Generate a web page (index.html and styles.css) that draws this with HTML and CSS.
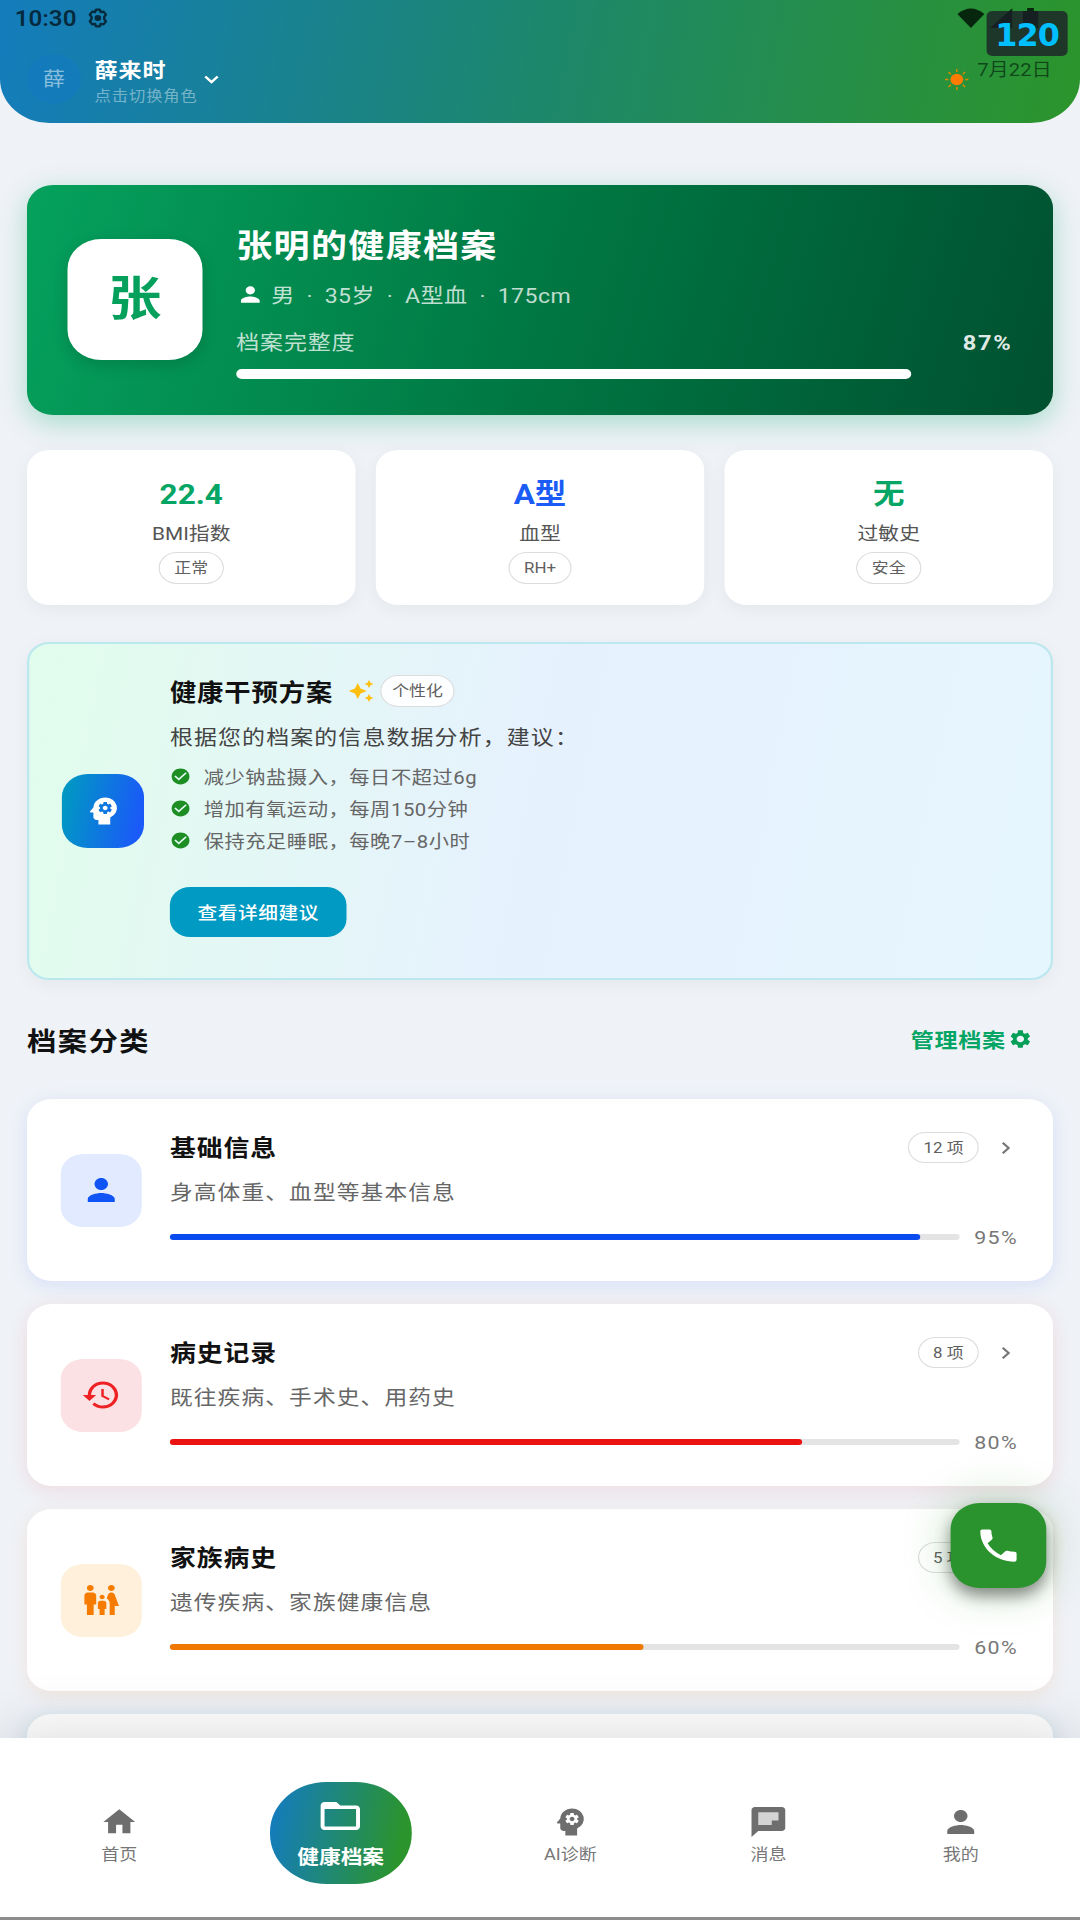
FILE: index.html
```html
<!DOCTYPE html>
<html lang="zh-CN">
<head>
    <meta charset="UTF-8">
    <meta name="viewport" content="width=device-width, initial-scale=1.0">
    <title>健康档案</title>
    <link rel="stylesheet" href="styles.css">
</head>
<body>
    <!-- Iconos compartidos -->
    <svg class="sprite" width="0" height="0">
        <symbol id="i-person" viewBox="0 0 24 24"><path d="M12 12c2.21 0 4-1.79 4-4s-1.79-4-4-4-4 1.79-4 4 1.79 4 4 4zm0 2c-2.67 0-8 1.34-8 4v2h16v-2c0-2.66-5.33-4-8-4z"/></symbol>
        <symbol id="i-brain" viewBox="0 0 24 24"><path fill-rule="evenodd" d="M13 8.57c-.79 0-1.43.64-1.43 1.43s.64 1.43 1.43 1.43 1.43-.64 1.43-1.43-.64-1.43-1.43-1.43z"/><path fill-rule="evenodd" d="M13 3C9.25 3 6.2 5.94 6.02 9.64L4.1 12.2a.5.5 0 0 0 .4.8H6v3c0 1.1.9 2 2 2h1v3h7v-4.68A6.999 6.999 0 0 0 13 3zm3 7c0 .13-.01.26-.02.39l.83.66c.08.06.1.16.05.25l-.8 1.39c-.05.09-.16.12-.24.09l-.99-.4c-.21.16-.43.29-.67.39L14 13.83c-.01.1-.1.17-.2.17h-1.6c-.1 0-.18-.07-.2-.17l-.15-1.06c-.25-.1-.47-.23-.68-.39l-.99.4c-.09.03-.2 0-.25-.09l-.8-1.39c-.05-.08-.03-.19.05-.25l.84-.66c-.01-.13-.02-.26-.02-.39s.02-.27.04-.39l-.85-.66c-.08-.06-.1-.16-.05-.26l.8-1.38c.05-.09.15-.12.24-.09l1 .4c.2-.15.43-.29.67-.39L12 6.17c.02-.1.1-.17.2-.17h1.6c.1 0 .18.07.2.17l.15 1.06c.24.1.46.23.67.39l1-.4c.09-.03.2 0 .24.09l.8 1.38c.05.09.03.2-.05.26l-.85.66c.03.12.04.25.04.39z"/></symbol>
        <symbol id="i-gear" viewBox="0 0 24 24"><path d="M19.14 12.94c.04-.3.06-.61.06-.94 0-.32-.02-.64-.07-.94l2.03-1.58c.18-.14.23-.41.12-.61l-1.92-3.32c-.12-.22-.37-.29-.59-.22l-2.39.96c-.5-.38-1.03-.7-1.62-.94l-.36-2.54c-.04-.24-.24-.41-.48-.41h-3.84c-.24 0-.43.17-.47.41l-.36 2.54c-.59.24-1.13.57-1.62.94l-2.39-.96c-.22-.08-.47 0-.59.22L2.74 8.87c-.12.21-.08.47.12.61l2.03 1.58c-.05.3-.09.63-.09.94s.02.64.07.94l-2.03 1.58c-.18.14-.23.41-.12.61l1.92 3.32c.12.22.37.29.59.22l2.39-.96c.5.38 1.03.7 1.62.94l.36 2.54c.05.24.24.41.48.41h3.84c.24 0 .44-.17.47-.41l.36-2.54c.59-.24 1.13-.56 1.62-.94l2.39.96c.22.08.47 0 .59-.22l1.92-3.32c.12-.22.07-.47-.12-.61l-2.01-1.58zM12 15.6c-1.98 0-3.6-1.62-3.6-3.6s1.62-3.6 3.6-3.6 3.6 1.62 3.6 3.6-1.62 3.6-3.6 3.6z"/></symbol>
        <symbol id="i-check" viewBox="0 0 24 24"><path d="M12 2C6.48 2 2 6.48 2 12s4.48 10 10 10 10-4.48 10-10S17.52 2 12 2zm-2 15l-5-5 1.41-1.41L10 14.17l7.59-7.59L19 8l-9 9z"/></symbol>
        <symbol id="i-right" viewBox="0 0 24 24"><path d="M10 6L8.59 7.41 13.17 12l-4.58 4.59L10 18l6-6z"/></symbol>
    </svg>

    <div class="screen">
        <header>
            <div class="status-bar">
                <span class="time">10:30</span>
                <svg class="status-gear" viewBox="0 0 24 24"><path fill="none" stroke="currentColor" stroke-width="2.6" stroke-linejoin="round" d="M10 2h4l1 3 3-.6 2.6 3.6-1.8 2.6v2.8l1.8 2.6-2.6 3.6-3-.6-1 3h-4l-1-3-3 .6L3.400 16l1.800-2.600v-2.800L3.400 8 6 4.400l3 .6z"/><circle cx="12" cy="12" r="3.600" fill="currentColor"/></svg>
                <div class="status-right">
                    <svg width="24" height="20" viewBox="0 0 24 20"><path d="M12 20L0 6Q12-5 24 6z"/></svg>
                    <svg width="20" height="20" viewBox="0 0 20 20"><path d="M20 0v20H0z"/></svg>
                    <svg width="14" height="20" viewBox="0 0 14 20"><path d="M4 0h6v3h4v17H0V3h4z"/></svg>
                </div>
            </div>
            <div class="user-row">
                <div class="user-avatar">薛</div>
                <div class="user-text">
                    <div class="user-name">薛来时</div>
                    <div class="user-tip">点击切换角色</div>
                </div>
                <svg class="user-arrow" viewBox="0 0 14 9"><path d="M1.500 1.500L7 7l5.500-5.500" fill="none" stroke="#fff" stroke-width="2.400"/></svg>
                <div class="weather">
                    <svg class="sun" viewBox="0 0 24 24"><circle cx="12" cy="12" r="6.500"/><path d="M12 0v3.500M12 20.500V24M0 12h3.500M20.500 12H24M3.500 3.500L6 6M18 18l2.500 2.500M3.500 20.500L6 18M18 6l2.500-2.500" stroke="#d98a00" stroke-width="1.500"/></svg>
                    <span class="date">7月22日</span>
                </div>
            </div>
            <div class="fps">120</div>
        </header>

        <main>
            <section class="hero">
                <div class="hero-avatar">张</div>
                <div class="hero-info">
                    <h1>张明的健康档案</h1>
                    <div class="hero-meta"><svg class="icon"><use href="#i-person"/></svg>男 · 35岁 · A型血 · 175cm</div>
                    <div class="hero-progress"><span>档案完整度</span><b>87%</b></div>
                    <div class="hero-bar"><div style="width: 87%"></div></div>
                </div>
            </section>

            <section class="stats">
                <div class="stat">
                    <div class="stat-value green">22.4</div>
                    <div class="stat-label">BMI指数</div>
                    <span class="tag">正常</span>
                </div>
                <div class="stat">
                    <div class="stat-value blue">A型</div>
                    <div class="stat-label">血型</div>
                    <span class="tag">RH+</span>
                </div>
                <div class="stat">
                    <div class="stat-value green">无</div>
                    <div class="stat-label">过敏史</div>
                    <span class="tag">安全</span>
                </div>
            </section>

            <section class="plan">
                <div class="plan-icon"><svg class="icon"><use href="#i-brain"/></svg></div>
                <div class="plan-body">
                    <div class="plan-title">
                        <h2>健康干预方案</h2>
                        <svg class="sparkle" viewBox="0 0 24 24"><path d="M19 9l1.250-2.750L23 5l-2.750-1.250L19 1l-1.250 2.750L15 5l2.750 1.250L19 9zm-7.500.5L9 4 6.500 9.500 1 12l5.500 2.500L9 20l2.500-5.500L17 12l-5.500-2.500zM19 15l-1.250 2.750L15 19l2.750 1.250L19 23l1.250-2.750L23 19l-2.750-1.250L19 15z"/></svg>
                        <span class="tag">个性化</span>
                    </div>
                    <p>根据您的档案的信息数据分析，建议：</p>
                    <ul>
                        <li><svg class="icon"><use href="#i-check"/></svg>减少钠盐摄入，每日不超过6g</li>
                        <li><svg class="icon"><use href="#i-check"/></svg>增加有氧运动，每周150分钟</li>
                        <li><svg class="icon"><use href="#i-check"/></svg>保持充足睡眠，每晚7–8小时</li>
                    </ul>
                    <button class="plan-button">查看详细建议</button>
                </div>
            </section>

            <div class="section-head">
                <h2>档案分类</h2>
                <a class="manage">管理档案<svg class="icon"><use href="#i-gear"/></svg></a>
            </div>

            <section class="list">
                <div class="card card-blue">
                    <div class="tile"><svg class="icon"><use href="#i-person"/></svg></div>
                    <div class="card-body">
                        <div class="card-top"><h3>基础信息</h3><span class="tag">12 项</span><svg class="icon arrow"><use href="#i-right"/></svg></div>
                        <p>身高体重、血型等基本信息</p>
                        <div class="progress"><div class="track"><div class="fill" style="width: 95%"></div></div><span>95%</span></div>
                    </div>
                </div>
                <div class="card card-red">
                    <div class="tile"><svg class="icon" viewBox="0 0 24 24"><path d="M13 3c-4.970 0-9 4.030-9 9H1l3.890 3.890.07.14L9 12H6c0-3.870 3.130-7 7-7s7 3.130 7 7-3.130 7-7 7c-1.930 0-3.680-.79-4.940-2.060l-1.420 1.420C8.270 19.990 10.510 21 13 21c4.970 0 9-4.030 9-9s-4.030-9-9-9zm-1 5v5l4.280 2.540.72-1.210-3.500-2.080V8H12z"/></svg></div>
                    <div class="card-body">
                        <div class="card-top"><h3>病史记录</h3><span class="tag">8 项</span><svg class="icon arrow"><use href="#i-right"/></svg></div>
                        <p>既往疾病、手术史、用药史</p>
                        <div class="progress"><div class="track"><div class="fill" style="width: 80%"></div></div><span>80%</span></div>
                    </div>
                </div>
                <div class="card card-orange">
                    <div class="tile"><svg class="icon" viewBox="0 0 24 24"><path d="M16 4c0-1.110.89-2 2-2s2 .89 2 2-.89 2-2 2-2-.89-2-2zm4 18v-6h2.500l-2.540-7.630A2.010 2.010 0 0 0 18.060 7h-.12a2 2 0 0 0-1.900 1.370l-.86 2.580c1.080.6 1.820 1.730 1.820 3.050v8h3zm-7.500-10.500c.83 0 1.500-.67 1.500-1.500s-.67-1.500-1.500-1.500S11 9.170 11 10s.67 1.500 1.500 1.500zM5.500 6c1.110 0 2-.89 2-2s-.89-2-2-2-2 .89-2 2 .89 2 2 2zm2 16v-7H9V9c0-1.100-.9-2-2-2H4c-1.100 0-2 .9-2 2v6h1.500v7h4zm6.500 0v-4h1v-4c0-.82-.68-1.500-1.500-1.500h-2c-.82 0-1.500.68-1.500 1.500v4h1v4h3z"/></svg></div>
                    <div class="card-body">
                        <div class="card-top"><h3>家族病史</h3><span class="tag">5 项</span><svg class="icon arrow"><use href="#i-right"/></svg></div>
                        <p>遗传疾病、家族健康信息</p>
                        <div class="progress"><div class="track"><div class="fill" style="width: 60%"></div></div><span>60%</span></div>
                    </div>
                </div>
                <div class="card card-cyan"></div>
            </section>
        </main>

        <button class="fab"><svg class="icon" viewBox="0 0 24 24"><path d="M6.620 10.790c1.440 2.830 3.760 5.140 6.590 6.590l2.200-2.200c.27-.27.67-.36 1.020-.24 1.120.37 2.330.57 3.570.57.55 0 1 .45 1 1V20c0 .55-.45 1-1 1-9.390 0-17-7.610-17-17 0-.55.45-1 1-1h3.500c.55 0 1 .45 1 1 0 1.250.2 2.450.57 3.570.11.35.03.74-.25 1.020l-2.200 2.200z"/></svg></button>

        <nav>
            <a><svg class="icon home" viewBox="0 0 24 24"><path d="M10 20v-6h4v6h5v-8h3L12 3 2 12h3v8z"/></svg>首页</a>
            <a class="active"><svg class="icon" viewBox="0 0 24 24"><path d="M20 6h-8l-2-2H4c-1.100 0-1.990.9-1.990 2L2 18c0 1.100.9 2 2 2h16c1.100 0 2-.9 2-2V8c0-1.100-.9-2-2-2zm0 12H4V8h16v10z"/></svg>健康档案</a>
            <a><svg class="icon"><use href="#i-brain"/></svg>AI诊断</a>
            <a><svg class="icon" viewBox="0 0 24 24"><path fill="#d4d4d4" d="M5 5h14v9H5z"/><path fill-rule="evenodd" d="M20 2H4c-1.100 0-1.990.9-1.990 2L2 22l4-4h14c1.100 0 2-.9 2-2V4c0-1.100-.9-2-2-2zM6 5.500h12v5.500h-4v3H6z"/></svg>消息</a>
            <a><svg class="icon"><use href="#i-person"/></svg>我的</a>
        </nav>
    </div>
</body>
</html>
```

FILE: styles.css
```css
* { box-sizing: border-box; }
body { margin: 0; width: 1080px; height: 1920px; overflow: hidden; background: #eff2f7; font-family: Roboto, "Noto Sans CJK SC", sans-serif; }
h1, h2, h3, p, ul { margin: 0; padding: 0; }
button { border: none; font-family: inherit; }
.sprite { position: absolute; }
.icon { display: block; flex: none; fill: currentColor; }

/* 960px design stretched to the 1080px display */
.screen { position: relative; width: 960px; height: 1920px; overflow: hidden; transform: scaleX(1.125); transform-origin: 0 0; background: #eff2f7; }

header { position: relative; height: 123px; border-radius: 0 0 44px 44px; background: linear-gradient(100deg, #147cbc, #1d876c 50%, #2b942d 98%); color: white; }
.status-bar { display: flex; align-items: center; height: 36px; padding: 0 37px 0 13px; color: rgba(0, 10, 15, 0.72); }
.time { font-size: 21.5px; font-weight: 600; }
.status-gear { width: 20px; height: 22px; margin-left: 9px; }
.status-right { display: flex; gap: 5px; margin-left: auto; fill: rgba(0, 15, 5, 0.82); }
.status-right svg:nth-child(2) { margin-right: 4px; }
.user-row { display: flex; align-items: center; height: 88px; padding: 0 24px; margin-top: -1px; }
.user-avatar { width: 48px; height: 50px; line-height: 51px; border-radius: 50%; background: rgba(18, 122, 190, 0.7); color: rgba(255, 255, 255, 0.5); font-size: 19.500px; text-align: center; }
.user-text { margin: 8px 0 0 12px; }
.user-name { font-size: 20.500px; line-height: 26px; font-weight: 700; letter-spacing: 0.8px; }
.user-tip { font-size: 14.500px; line-height: 25px; letter-spacing: 0.8px; color: rgba(255, 255, 255, 0.42); }
.user-arrow { width: 14px; height: 9px; margin-left: 5px; }
.weather { display: flex; align-items: center; margin-left: auto; }
.sun { width: 21px; height: 23px; fill: #ff7b00; }
.date { margin: 0 1px 18px 8px; font-size: 18px; line-height: 20px; color: rgba(0, 20, 10, 0.6); }
.fps { position: absolute; top: 11px; right: 11px; width: 72px; height: 45px; border-radius: 5px; background: rgba(27, 30, 40, 0.78); color: #00bfff; font: bold 31.500px/48px "DejaVu Sans Condensed", "DejaVu Sans", sans-serif; font-stretch: condensed; letter-spacing: -0.8px; text-align: center; }

main { padding: 61.500px 24px 0; }

.hero { display: flex; align-items: center; gap: 30px; height: 230px; padding: 0 36px; border-radius: 23px; background: linear-gradient(105deg, #05a15d, #007642 52%, #005030); box-shadow: 0 8px 26px rgba(0, 166, 100, 0.3); color: white; }
.hero-avatar { width: 120px; height: 121px; border-radius: 30px; background: white; color: #05a05c; font-size: 47px; font-weight: 600; line-height: 119px; text-align: center; box-shadow: 0 5px 14px rgba(0, 0, 0, 0.14); }
.hero-info { flex: 1; }
.hero h1 { margin-top: 1px; font-size: 32px; line-height: 48px; font-weight: 600; letter-spacing: 1.200px; }
.hero-meta { display: flex; align-items: center; gap: 6px; height: 49px; font-size: 20.500px; letter-spacing: 0.400px; word-spacing: 5px; white-space: nowrap; color: rgba(255, 255, 255, 0.75); }
.hero-meta .icon { width: 25px; height: 25px; color: white; }
.hero-progress { display: flex; justify-content: space-between; height: 46px; line-height: 48px; font-size: 20.400px; letter-spacing: 0.800px; color: rgba(255, 255, 255, 0.75); }
.hero-progress b { font-size: 21px; letter-spacing: 1.500px; color: rgba(255, 255, 255, 0.9); }
.hero-bar { height: 10px; margin-top: 4px; }
.hero-bar div { height: 10px; border-radius: 5px; background: white; }

.stats { display: grid; grid-template-columns: 1fr 1fr 1fr; gap: 18px; margin-top: 35.500px; }
.stat { display: flex; flex-direction: column; align-items: center; height: 155px; padding-top: 24px; border-radius: 20px; background: white; box-shadow: 0 4px 16px rgba(0, 0, 0, 0.05); }
.stat-value { font-size: 28px; line-height: 42px; font-weight: 700; }
.stat-label { font-size: 18.500px; line-height: 36px; color: #555; }
.green { color: #05a565; }
.blue { color: #1a5cf5; }
.tag { height: 31.500px; padding: 0 12.500px; border: 1.500px solid #dcdcdc; border-radius: 16px; background: rgba(255, 255, 255, 0.9); color: #606060; font-size: 15px; line-height: 30px; white-space: nowrap; }

.plan { display: flex; align-items: center; gap: 23px; height: 338px; margin-top: 37px; padding: 0 29px; border: 2px solid #bbe8ee; border-radius: 20px; background: linear-gradient(100deg, #e1fdec, #e6f1fe 50%, #e6f6fe); box-shadow: 0 4px 16px rgba(0, 0, 0, 0.05); }
.plan-icon { display: flex; align-items: center; justify-content: center; width: 73px; height: 74px; border-radius: 23px; background: linear-gradient(100deg, #0099c2 5%, #1a5af8 90%); color: white; }
.plan-icon .icon { width: 36px; height: 36px; }
.plan-body { flex: 1; margin-top: -10px; }
.plan-title { display: flex; align-items: center; height: 32px; }
.plan-title h2 { font-size: 23.400px; letter-spacing: 0.800px; font-weight: 700; color: #111; }
.plan-title .tag { padding: 0 9.500px; }
.sparkle { width: 24px; height: 24px; margin: 0 5px 0 13px; fill: #fdbf0f; }
.plan p { margin: 13px 0 4px; font-size: 20.400px; letter-spacing: 1px; line-height: 36px; color: #444; }
.plan ul { list-style: none; }
.plan li { display: flex; align-items: center; gap: 11px; height: 32px; font-size: 18px; letter-spacing: 0.500px; color: #666; }
.plan li .icon { width: 19px; height: 19px; color: #1d8e24; }
.plan-button { display: block; width: 157px; height: 50px; margin-top: 31px; padding: 0 0 2px; border-radius: 18px; background: #009ac2; color: white; font-size: 17.500px; letter-spacing: 0.500px; font-weight: 500; }

.section-head { display: flex; align-items: center; justify-content: space-between; height: 50px; margin-top: 34px; padding-right: 18px; }
.section-head h2 { font-size: 26px; letter-spacing: 1.300px; color: #111; }
.manage { display: flex; align-items: center; gap: 2px; font-size: 20.500px; letter-spacing: 0.600px; font-weight: 700; color: #05a565; }
.manage .icon { width: 22px; height: 24px; color: #059f58; }

.list { display: flex; flex-direction: column; gap: 23px; margin-top: 35px; }
.card { display: flex; align-items: center; gap: 25px; height: 182px; padding: 0 30px; border-radius: 22px; background: white; }
.tile { display: flex; align-items: center; justify-content: center; width: 72px; height: 73px; border-radius: 20px; }
.tile .icon { width: 36px; height: 36px; }
.card-body { flex: 1; height: 158px; padding-top: 20px; }
.card-top { display: flex; align-items: center; height: 33px; }
.card-top h3 { flex: 1; margin-top: -4px; font-size: 23px; letter-spacing: 0.800px; color: #111; }
.card-top .arrow { width: 24px; height: 24px; margin-left: 12px; color: #777; }
.card p { font-size: 20.200px; letter-spacing: 1px; line-height: 34px; margin-top: 12px; color: #666; }
.progress { display: flex; align-items: center; gap: 13px; height: 24px; margin-top: 15px; }
.progress span { width: 40px; font-size: 19px; letter-spacing: 1.200px; color: #777; }
.track { flex: 1; height: 6px; border-radius: 3px; background: #e4e4e4; }
.fill { height: 6px; border-radius: 3px; }
.card-blue { box-shadow: 0 4px 18px rgba(16, 80, 245, 0.11); }
.card-blue .tile { background: #e1eaff; color: #1054f5; }
.card-blue .fill { background: #0a4bf0; }
.card-red { box-shadow: 0 4px 18px rgba(238, 34, 34, 0.11); }
.card-red .tile { background: #fbe1e3; color: #ee2224; }
.card-red .fill { background: #eb1212; }
.card-orange { box-shadow: 0 4px 18px rgba(245, 124, 0, 0.11); }
.card-orange .tile { background: #fef0db; color: #f57c00; }
.card-orange .fill { background: #f07800; }
.card-cyan { box-shadow: 0 4px 18px rgba(0, 154, 194, 0.15); }

.fab { position: absolute; right: 30px; top: 1503px; display: flex; align-items: center; justify-content: center; width: 85px; height: 85px; padding: 0; border-radius: 26px; background: #2b932d; color: white; box-shadow: 0 8px 14px rgba(0, 0, 0, 0.42), 0 0 44px rgba(43, 147, 45, 0.3); }
.fab .icon { width: 43px; height: 43px; }

nav { position: absolute; left: 0; right: 0; bottom: 0; display: flex; align-items: center; justify-content: space-between; height: 182px; padding: 11px 64px 0 65px; background: white; border-bottom: 3px solid #8c8c8c; box-shadow: 0 -4px 56px rgba(0, 0, 0, 0.15); }
nav a { display: flex; flex-direction: column; align-items: center; padding: 4px 24px 0; font-size: 16px; line-height: 24px; color: #777; }
nav .icon { width: 36px; height: 36px; margin-bottom: 3px; color: #6e6e6e; }
nav .home { width: 34px; }
nav .active { width: 126px; height: 102px; margin: 0 7px 0 6px; padding: 13px 0 0; border-radius: 50px; background: linear-gradient(100deg, #147cbc 5%, #2b942d 88%); color: white; font-size: 19.300px; font-weight: 700; }
nav .active .icon { width: 43px; height: 42px; margin-bottom: 9px; color: white; }
```
